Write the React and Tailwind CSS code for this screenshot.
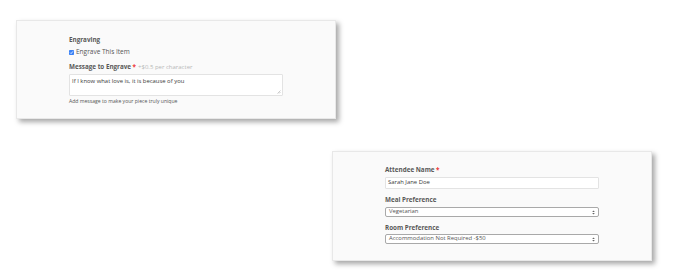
import React from "react";

const font = { fontFamily: '"Open Sans", "Noto Sans", sans-serif' };

function Label({ children, req, extra, className = "" }) {
  return (
    <div className={"flex items-center h-[8px] leading-[8px] " + className}>
      <span className="text-[6.3px] font-bold text-[#585858]">{children}</span>
      {req && <span className="text-[6.3px] font-bold text-[#e33] ml-[1.5px]">*</span>}
      {extra && <span className="text-[6px] text-[#b8b8b8] ml-[2px]">{extra}</span>}
    </div>
  );
}

function SelectBox({ value, className = "" }) {
  return (
    <div className={"flex items-center justify-between h-[10px] w-[214px] rounded-[2px] border border-[#a9a9a9] bg-white pl-[3px] pr-[3px] " + className}>
      <span className="text-[5.9px] text-[#555] leading-none">{value}</span>
      <svg width="3" height="5" viewBox="0 0 3 5">
        <path d="M0.2 2 L1.5 0.4 L2.8 2 Z" fill="#666" />
        <path d="M0.2 3 L1.5 4.6 L2.8 3 Z" fill="#666" />
      </svg>
    </div>
  );
}

export default function App() {
  return (
    <div className="bg-white w-[700px] h-[280px] flex flex-col" style={font}>
      <div className="ml-[16px] mt-[20px] w-[320px] h-[99px] bg-[#fafafa] border border-[#e8e8e8] shadow-[3px_3px_5px_rgba(0,0,0,0.35)] pl-[52px] pt-[15px] flex flex-col">
        <Label>Engraving</Label>
        <div className="flex items-center h-[8px] mt-[4px]">
          <svg width="5" height="5" viewBox="0 0 5 5" className="mr-[2px]">
            <rect x="0" y="0" width="5" height="5" rx="0.8" fill="#3b82f6" />
            <path d="M1.1 2.6 L2.1 3.6 L3.9 1.4" stroke="#fff" strokeWidth="0.8" fill="none" />
          </svg>
          <span className="text-[6.5px] text-[#555] leading-none">Engrave This Item</span>
        </div>
        <Label req extra="+$0.5 per character" className="mt-[7px]">Message to Engrave</Label>
        <div className="relative mt-[3px] w-[214px] h-[22px] bg-white border border-[#e3e3e3] rounded-[1px] pl-[2px] pt-[4px]">
          <span className="block text-[5.9px] leading-none text-[#3a3a3a]">If I know what love is, it is because of you</span>
          <svg width="4" height="4" viewBox="0 0 4 4" className="absolute right-[1px] bottom-[1px]">
            <path d="M0.5 3.5 L3.5 0.5 M2 3.5 L3.5 2" stroke="#999" strokeWidth="0.5" />
          </svg>
        </div>
        <div className="mt-[2px] h-[6px] leading-[6px] text-[5.1px] text-[#555]">Add message to make your piece truly unique</div>
      </div>

      <div className="ml-[332px] mt-[32px] w-[320px] h-[110px] bg-[#fafafa] border border-[#e8e8e8] shadow-[3px_3px_5px_rgba(0,0,0,0.35)] pl-[52px] pt-[14px] flex flex-col">
        <Label req>Attendee Name</Label>
        <div className="mt-[3px] w-[214px] h-[12px] bg-white border border-[#e3e3e3] rounded-[1px] pl-[2px] flex items-center">
          <span className="text-[5.9px] text-[#3a3a3a] leading-none">Sarah Jane Doe</span>
        </div>
        <Label className="mt-[7px]">Meal Preference</Label>
        <SelectBox value="Vegetarian" className="mt-[3px]" />
        <Label className="mt-[7px]">Room Preference</Label>
        <SelectBox value="Accommodation Not Required -$50" className="mt-[2px]" />
      </div>
    </div>
  );
}
